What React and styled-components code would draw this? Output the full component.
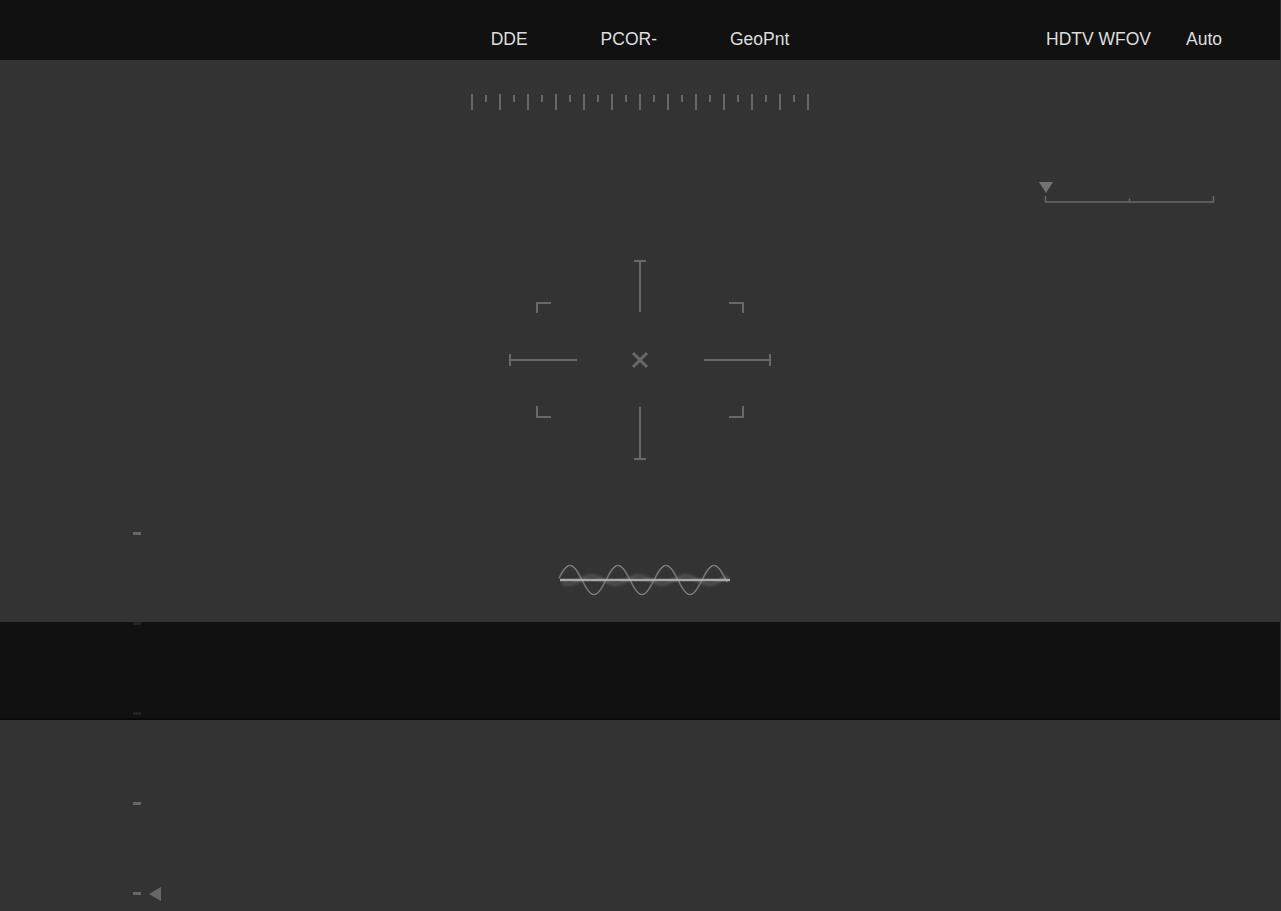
import React from 'react';
import styled, { createGlobalStyle } from 'styled-components';

const GlobalStyle = createGlobalStyle`
  html, body {
    margin: 0;
    padding: 0;
    background: #333333;
  }
  body {
    font-family: "Liberation Sans", Arial, sans-serif;
  }
`;

const HUD = '#686868';

export const Screen = styled.div`
  width: 1280px;
  background: #333333;
`;

export const TopBar = styled.header`
  height: 60px;
  box-sizing: border-box;
  padding-top: 19px;
  background: #111111;
  display: grid;
  grid-template-columns: 1fr auto 1fr;
  align-items: center;
  color: #dedede;
  font-size: 17.5px;
`;

export const ModeGroup = styled.div`
  display: flex;
  align-items: center;
  gap: ${p => p.gap}px;
  justify-self: ${p => p.align || 'center'};
  padding-right: ${p => p.padRight || 0}px;
  grid-column: ${p => p.col};
`;

export const ModeLabel = styled.span`
  white-space: nowrap;
`;

export const Viewport = styled.main`
  position: relative;
  height: 851px;
  overflow: hidden;
`;

export const Layer = styled.svg`
  position: absolute;
  left: ${p => p.x}px;
  top: ${p => p.y}px;
  overflow: visible;
`;

export const ElevationScale = styled.div`
  position: absolute;
  left: 133px;
  top: 472px;
  display: flex;
  flex-direction: column;
  gap: 87px;
`;

export const ScaleRow = styled.div`
  display: flex;
  align-items: center;
  gap: 8px;
  height: 3px;
`;

export const ScaleDash = styled.span`
  width: 8px;
  height: 3px;
  background: ${HUD};
`;

export const ScaleMarker = styled.span`
  width: 0;
  height: 0;
  border-top: 7px solid transparent;
  border-bottom: 7px solid transparent;
  border-right: 12px solid ${HUD};
`;

export const Band = styled.div`
  position: absolute;
  left: 0;
  right: 0;
  top: 562px;
  height: 96px;
  background: rgba(0, 0, 0, 0.667);
  border-bottom: 2px solid rgba(0, 0, 0, 0.45);
`;

const ticks = Array.from({ length: 25 }, (_, i) => i);

function HeadingRuler() {
  return (
    <Layer x={470} y={34} width={340} height={16}>
      {ticks.map(i => {
        const long = i % 2 === 0;
        return (
          <rect
            key={i}
            x={1 + i * 14}
            y={long ? 0 : 1}
            width={2}
            height={long ? 16 : 7}
            fill={HUD}
          />
        );
      })}
    </Layer>
  );
}

function RangeScale() {
  return (
    <Layer x={1036} y={116} width={190} height={30}>
      <polygon points="3,6 17,6 10,17" fill="#727272" />
      <g stroke={HUD} strokeWidth={1.5} fill="none">
        <path d="M9.5 20 V26 H177.5 V20" />
        <path d="M93.5 22.5 V26" />
      </g>
    </Layer>
  );
}

function Reticle() {
  return (
    <Layer x={500} y={190} width={280} height={220}>
      <g stroke={HUD} strokeWidth={2} fill="none">
        <path d="M140 11 V62 M134 11 H146" />
        <path d="M140 157 V209 M134 209 H146" />
        <path d="M10 110 H77 M10 104 V116" />
        <path d="M204 110 H270 M270 104 V116" />
        <path d="M37 63 V53 H51" />
        <path d="M229 53 H243 V63" />
        <path d="M37 156 V167 H51" />
        <path d="M229 167 H243 V156" />
      </g>
      <path d="M133 103 L147 117 M147 103 L133 117" stroke={HUD} strokeWidth={3} />
    </Layer>
  );
}

function sinePath(x0, x1, phase, period, amp, cy) {
  let d = '';
  for (let x = x0; x <= x1; x += 1) {
    const y = cy - amp * Math.sin((2 * Math.PI * (x - phase)) / period);
    d += `${x === x0 ? 'M' : 'L'}${x} ${y.toFixed(2)} `;
  }
  return d;
}

const mainWave = sinePath(9, 177, 8, 48, 14.5, 30);
const ghostWave = sinePath(12, 178, 30, 47, 4, 30);

function SignalWave() {
  return (
    <Layer x={550} y={490} width={190} height={60}>
      <defs>
        <filter id="soft" x="-10%" y="-50%" width="120%" height="200%">
          <feGaussianBlur stdDeviation="1.6" />
        </filter>
      </defs>
      <path d={ghostWave} stroke="#8a8a8a" strokeWidth={3} fill="none" opacity={0.4} filter="url(#soft)" />
      <path d={mainWave} stroke="#7a7a7a" strokeWidth={1.5} fill="none" />
      <path d="M10 30 H180" stroke="#a9a9a9" strokeWidth={2.5} />
    </Layer>
  );
}

const scaleRows = [false, false, false, false, true];

export default function App() {
  return (
    <>
      <GlobalStyle />
      <Screen>
        <TopBar>
          <ModeGroup col={2} gap={73}>
            <ModeLabel>DDE</ModeLabel>
            <ModeLabel>PCOR-</ModeLabel>
            <ModeLabel>GeoPnt</ModeLabel>
          </ModeGroup>
          <ModeGroup col={3} gap={35} align="end" padRight={58}>
            <ModeLabel>HDTV WFOV</ModeLabel>
            <ModeLabel>Auto</ModeLabel>
          </ModeGroup>
        </TopBar>
        <Viewport>
          <HeadingRuler />
          <RangeScale />
          <Reticle />
          <SignalWave />
          <ElevationScale>
            {scaleRows.map((marked, i) => (
              <ScaleRow key={i}>
                <ScaleDash />
                {marked && <ScaleMarker />}
              </ScaleRow>
            ))}
          </ElevationScale>
          <Band />
        </Viewport>
      </Screen>
    </>
  );
}
